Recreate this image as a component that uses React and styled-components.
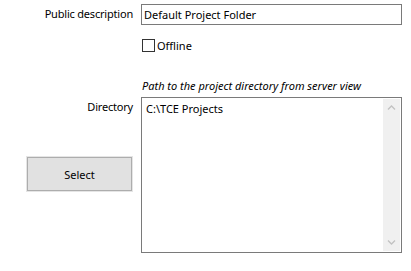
import React from 'react';
import styled, { createGlobalStyle } from 'styled-components';

const Global = createGlobalStyle`
  html, body {
    margin: 0;
    padding: 0;
    background: #ffffff;
  }
  body {
    font-family: "Noto Sans", "Open Sans", sans-serif;
    font-size: 11px;
    color: #000000;
  }
`;

const Form = styled.div`
  display: grid;
  grid-template-columns: 133px 261px;
  column-gap: 8px;
  padding-top: 4px;
`;

const Label = styled.div`
  text-align: right;
  line-height: 14px;
  letter-spacing: -0.2px;
  padding-top: ${p => p.top || 0}px;
`;

const Cell = styled.div`
  margin-top: ${p => p.top || 0}px;
`;

const TextInput = styled.div`
  box-sizing: border-box;
  height: 21px;
  border: 1px solid #7a7a7a;
  padding: 2px 2px;
  line-height: 15px;
`;

const CheckRow = styled.label`
  display: flex;
  align-items: center;
  gap: 2px;
  height: 13px;
  padding-left: 1px;
`;

const Box = styled.span`
  box-sizing: border-box;
  width: 13px;
  height: 13px;
  border: 1px solid #333333;
  background: #ffffff;
`;

const Hint = styled.div`
  font-style: italic;
  line-height: 14px;
  padding-left: 1px;
`;

const LeftCol = styled.div`
  display: flex;
  flex-direction: column;
  align-items: flex-end;
  padding-top: 6px;
  letter-spacing: -0.2px;
`;

const Button = styled.div`
  box-sizing: border-box;
  margin-top: 43px;
  margin-right: 1px;
  width: 105px;
  height: 34px;
  background: #e1e1e1;
  border: 1px solid #adadad;
  outline: 1px solid #e5e5e5;
  display: flex;
  align-items: center;
  justify-content: center;
  letter-spacing: 0;
`;

const Area = styled.div`
  box-sizing: border-box;
  height: 156px;
  border: 1px solid #7a7a7a;
  padding: 1px;
  display: flex;
`;

const AreaText = styled.div`
  flex: 1;
  padding: 2px 3px;
  line-height: 15px;
`;

const Scroll = styled.div`
  width: 17px;
  background: #f0f0f0;
  display: flex;
  flex-direction: column;
  justify-content: space-between;
  align-items: center;
  padding: 6px 0;
`;

const Chevron = ({ down }) => (
  <svg width="9" height="6" viewBox="0 0 9 6">
    <path
      d={down ? 'M1 1.5 L4.5 5 L8 1.5' : 'M1 4.5 L4.5 1 L8 4.5'}
      fill="none"
      stroke="#c2c2c2"
      strokeWidth="1.3"
    />
  </svg>
);

export default function App() {
  return (
    <>
      <Global />
      <Form>
        <Label top={3}>Public description</Label>
        <TextInput>Default Project Folder</TextInput>

        <div />
        <Cell top={14}>
          <CheckRow>
            <Box />
            Offline
          </CheckRow>
        </Cell>

        <div />
        <Cell top={27}>
          <Hint>Path to the project directory from server view</Hint>
        </Cell>

        <LeftCol>
          Directory
          <Button>Select</Button>
        </LeftCol>
        <Cell top={4}>
          <Area>
            <AreaText>C:\TCE Projects</AreaText>
            <Scroll>
              <Chevron />
              <Chevron down />
            </Scroll>
          </Area>
        </Cell>
      </Form>
    </>
  );
}
